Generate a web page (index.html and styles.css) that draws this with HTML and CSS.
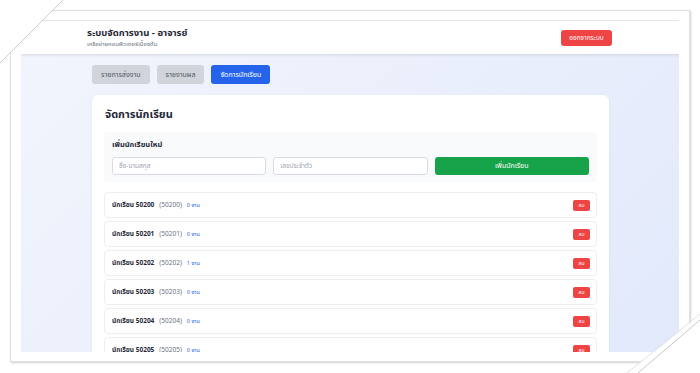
FILE: index.html
```html
<!DOCTYPE html>
<html lang="th">
<head>
    <meta charset="UTF-8">
    <meta name="viewport" content="width=device-width, initial-scale=1.0">
    <title>ระบบจัดการงาน - อาจารย์</title>
    <link rel="stylesheet" href="styles.css">
</head>
<body>
    <div class="frame">
        <div class="app">
            <header class="topbar">
                <div class="brand">
                    <div class="brand-title">ระบบจัดการงาน - อาจารย์</div>
                    <div class="brand-sub">เครือข่ายคอมพิวเตอร์เบื้องต้น</div>
                </div>
                <button class="logout">ออกจากระบบ</button>
            </header>

            <main class="main">
                <nav class="tabs">
                    <button class="tab">รายการส่งงาน</button>
                    <button class="tab">รายงานผล</button>
                    <button class="tab active">จัดการนักเรียน</button>
                </nav>

                <section class="card">
                    <h2 class="card-title">จัดการนักเรียน</h2>

                    <div class="add-box">
                        <h3 class="add-title">เพิ่มนักเรียนใหม่</h3>
                        <form class="add-row">
                            <input type="text" placeholder="ชื่อ-นามสกุล">
                            <input type="text" placeholder="เลขประจำตัว">
                            <button type="button" class="add-btn">เพิ่มนักเรียน</button>
                        </form>
                    </div>

                    <div class="student-list">
                        <div class="student">
                            <div><span class="name">นักเรียน 50200</span><span class="sid">(50200)</span><span class="count">0 งาน</span></div>
                            <button class="del">ลบ</button>
                        </div>
                        <div class="student">
                            <div><span class="name">นักเรียน 50201</span><span class="sid">(50201)</span><span class="count">0 งาน</span></div>
                            <button class="del">ลบ</button>
                        </div>
                        <div class="student">
                            <div><span class="name">นักเรียน 50202</span><span class="sid">(50202)</span><span class="count">1 งาน</span></div>
                            <button class="del">ลบ</button>
                        </div>
                        <div class="student">
                            <div><span class="name">นักเรียน 50203</span><span class="sid">(50203)</span><span class="count">0 งาน</span></div>
                            <button class="del">ลบ</button>
                        </div>
                        <div class="student">
                            <div><span class="name">นักเรียน 50204</span><span class="sid">(50204)</span><span class="count">0 งาน</span></div>
                            <button class="del">ลบ</button>
                        </div>
                        <div class="student">
                            <div><span class="name">นักเรียน 50205</span><span class="sid">(50205)</span><span class="count">0 งาน</span></div>
                            <button class="del">ลบ</button>
                        </div>
                    </div>
                </section>
            </main>
        </div>
    </div>

    <!-- cut page corners -->
    <svg class="corners" width="700" height="373" viewBox="0 0 700 373">
        <polygon points="0,0 62,0 0,62" fill="#fff"/>
        <line x1="63" y1="0" x2="0" y2="63" stroke="#cfcfcf" stroke-width="1"/>
        <polygon points="628,373 700,315 700,373" fill="#fff"/>
        <line x1="627" y1="373" x2="700" y2="314" stroke="#e2e2e2" stroke-width="1"/>
        <line x1="638" y1="373" x2="700" y2="320" stroke="#c8c8c8" stroke-width="1"/>
    </svg>
</body>
</html>
```

FILE: styles.css
```css
body {
    margin: 0;
    width: 700px;
    height: 373px;
    overflow: hidden;
    background: #fff;
    font-family: "Noto Sans Thai", "Noto Sans", "Liberation Sans", sans-serif;
    color: #1f2937;
}
.frame {
    margin: 10px 0 0 10px;
    width: 680px;
    height: 352px;
    box-sizing: border-box;
    padding: 9px 10px;
    border: 1px solid #dedede;
    box-shadow: 1px 1px 2px rgba(0, 0, 0, 0.18);
    background: #fff;
}
.app {
    height: 100%;
    overflow: hidden;
    background: linear-gradient(135deg, #f2f5fc 0%, #e2e9fb 100%);
    border-top: 1px solid #e4e4e4;
    box-sizing: border-box;
}
.topbar {
    height: 33px;
    background: #fff;
    box-shadow: 0 1px 3px rgba(0, 0, 0, 0.12);
    display: flex;
    align-items: center;
    justify-content: space-between;
    padding: 0 67px 0 66px;
}
.brand-title {
    font-size: 9.5px;
    font-weight: bold;
    line-height: 14px;
    color: #1f2937;
}
.brand-sub {
    font-size: 6px;
    line-height: 9px;
    color: #6b7280;
}
.logout {
    width: 51px;
    height: 16px;
    padding: 0;
    border: none;
    border-radius: 3px;
    background: #ef4444;
    color: #fff;
    font-family: inherit;
    font-size: 6.5px;
}
.main {
    padding: 11px 70px 0 71px;
}
.tabs {
    display: flex;
    gap: 7px;
}
.tab {
    height: 19px;
    padding: 0 9px;
    border: none;
    border-radius: 3px;
    background: #d1d5db;
    color: #4b5563;
    font-family: inherit;
    font-size: 7px;
}
.tab.active {
    background: #2563eb;
    color: #fff;
}
.card {
    margin-top: 11px;
    background: #fff;
    border-radius: 6px;
    box-shadow: 0 1px 3px rgba(0, 0, 0, 0.06);
    padding: 12px;
}
.card-title {
    margin: 0;
    font-size: 11px;
    line-height: 16px;
    font-weight: bold;
    padding-left: 1px;
}
.add-box {
    margin-top: 9px;
    background: #f9fafb;
    border-radius: 4px;
    padding: 8px 8px 7px;
}
.add-title {
    margin: 0 0 8px;
    font-size: 7.5px;
    line-height: 9px;
    font-weight: bold;
}
.add-row {
    display: grid;
    grid-template-columns: 1fr 1fr 1fr;
    gap: 7px;
}
.add-row input {
    height: 18px;
    box-sizing: border-box;
    border: 1px solid #d9dde3;
    border-radius: 3px;
    padding: 0 6px;
    font-family: inherit;
    font-size: 6.5px;
    background: #fff;
}
.add-row input::placeholder {
    color: #9ca3af;
}
.add-btn {
    height: 18px;
    border: none;
    border-radius: 3px;
    background: #16a34a;
    color: #fff;
    font-family: inherit;
    font-size: 7px;
}
.student-list {
    margin-top: 10px;
    display: flex;
    flex-direction: column;
    gap: 3px;
}
.student {
    height: 26px;
    box-sizing: border-box;
    border: 1px solid #eceef1;
    border-radius: 4px;
    padding: 0 6px 0 7px;
    display: flex;
    align-items: center;
    justify-content: space-between;
    font-size: 6.5px;
}
.name {
    font-weight: bold;
    color: #1f2937;
}
.sid {
    margin-left: 5px;
    color: #6b7280;
}
.count {
    margin-left: 5px;
    color: #2563eb;
    font-size: 5.5px;
}
.del {
    width: 17px;
    height: 11px;
    padding: 0;
    border: none;
    border-radius: 2px;
    background: #ef4444;
    color: #fff;
    font-family: inherit;
    font-size: 5px;
}
.corners {
    position: absolute;
    top: 0;
    left: 0;
    pointer-events: none;
}
```
